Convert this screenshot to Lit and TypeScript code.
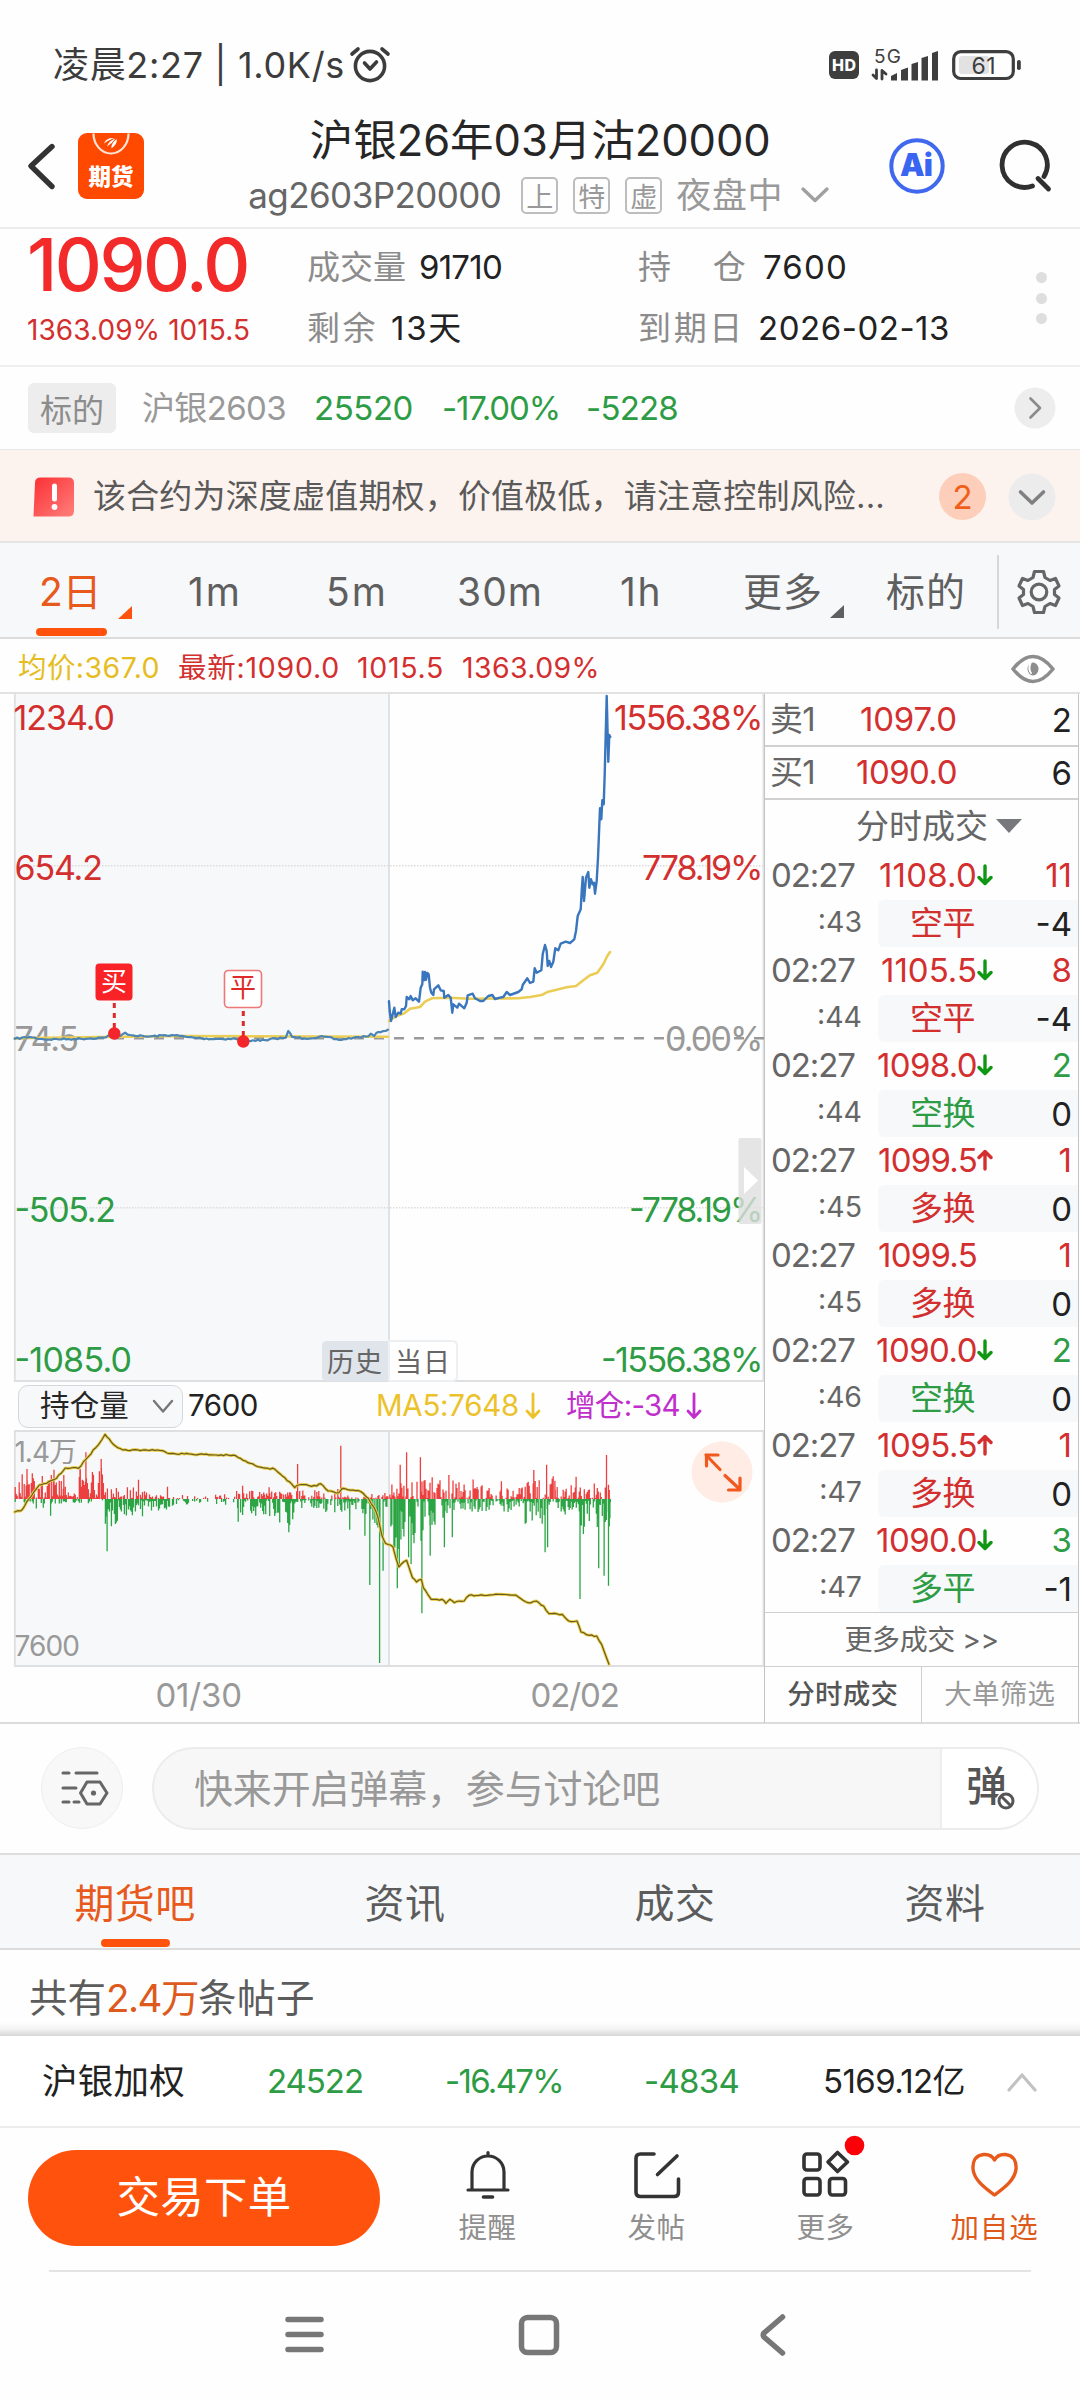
import { LitElement, html, svg, css } from "lit";
import { customElement, property } from "lit/decorators.js";
import { styleMap } from "lit/directives/style-map.js";

const FONT = css`Inter, "Noto Sans CJK SC", sans-serif`;

/** A run of text whose tracking is adjusted so that it fills a given width. */
@customElement("fit-text")
class FitText extends LitElement {
  static styles = css`
    :host { display: inline-block; white-space: nowrap; line-height: 1; flex: none; }
    .run { display: inline-block; }
  `;
  @property({ type: Number }) w = 0;
  @property() text = "";
  @property({ attribute: false }) tracking = 0;
  firstUpdated() {
    const run = this.renderRoot.querySelector(".run") as HTMLElement;
    const n = [...this.text].length;
    if (this.w && n > 1) {
      this.tracking = (this.w - run.getBoundingClientRect().width) / n;
      this.requestUpdate();
    }
  }
  render() {
    return html`<span class="run" style=${styleMap({ letterSpacing: `${this.tracking}px` })}>${this.text}</span>`;
  }
}

const ft = (text: string, w = 0, cls = "") => html`<fit-text class=${cls} .w=${w} .text=${text}></fit-text>`;

type Pt = [number, number];
const path = (pts: Pt[]) => pts.map(([x, y]) => `${x.toFixed(1)},${y.toFixed(1)}`).join(" ");

let seed = 7;
const rnd = () => ((seed = (seed * 16807) % 2147483647) / 2147483647);

const densify = (pts: Pt[], step: number, amp: number): Pt[] => {
  const out: Pt[] = [];
  for (let i = 0; i < pts.length - 1; i++) {
    const [x0, y0] = pts[i];
    const [x1, y1] = pts[i + 1];
    const n = Math.max(1, Math.round((x1 - x0) / step));
    for (let k = 0; k < n; k++) {
      out.push([x0 + ((x1 - x0) * k) / n, y0 + ((y1 - y0) * k) / n + (k ? (rnd() - 0.5) * amp : 0)]);
    }
  }
  out.push(pts[pts.length - 1]);
  return out;
};

const day2: Pt[] = ([[57,931],[59,960],[63,990],[67,975],[73,950],[77,978],[85,965],[92,968],[95,955],[103,955],[108,945],[110,918],[118,925],[122,915],[128,928],[137,922],[147,932],[152,890],[157,880],[158,842],[162,868],[165,843],[168,866],[172,846],[176,850],[180,890],[184,905],[190,912],[192,895],[205,883],[212,898],[221,900],[223,920],[235,912],[242,920],[247,965],[250,940],[262,950],[267,938],[283,952],[290,935],[293,913],[308,908],[315,922],[330,930],[340,930],[355,915],[367,912],[375,924],[390,920],[400,918],[410,903],[420,912],[445,903],[455,895],[458,882],[472,862],[480,876],[490,872],[494,832],[500,845],[514,838],[518,790],[525,762],[530,780],[533,825],[538,810],[543,828],[550,812],[556,772],[565,778],[572,758],[587,752],[600,756],[613,745],[618,720],[623,675],[632,655],[635,600],[638,558],[642,630],[648,560],[655,543],[658,590],[663,565],[668,580],[672,575],[675,608],[680,570],[684,500],[690,352],[694,385],[697,328],[701,340],[704,250],[710,15],[715,212],[718,132],[721,138]] as Pt[])
  .map(([x, y]) => [370 + x / 3, 690 + y / 3]);
const avg2: Pt[] = ([[57,990],[80,975],[103,967],[120,953],[150,948],[165,932],[185,922],[240,920],[300,923],[445,922],[480,918],[515,912],[535,902],[590,889],[618,885],[640,868],[660,853],[682,845],[700,820],[712,795],[720,783]] as Pt[])
  .map(([x, y]) => [370 + x / 3, 690 + y / 3]);
const L = 0.4911;
const day1: Pt[] = densify(([[30,1073],[60,1068],[90,1075],[150,1074],[210,1070],[232,1058],[245,1065],[255,1055],[265,1062],[300,1067],[350,1062],[380,1068],[410,1072],[440,1074],[480,1073],[495,1082],[515,1078],[545,1078],[560,1072],[582,1070],[587,1050],[595,1068],[620,1072],[660,1067],[690,1077],[720,1070],[750,1066],[755,1058],[762,1065],[770,1053],[790,1046]] as Pt[])
  .map(([x, y]) => [x * L, 680 + y / 3]), 2.5, 1.8);
const avg1: Pt[] = ([[30,1072],[200,1068],[380,1065],[790,1067]] as Pt[]).map(([x, y]) => [x * L, 680 + y / 3]);
const holding: Pt[] = densify(([[30,423],[42,420],[50,405],[58,385],[68,365],[80,342],[95,337],[115,322],[133,291],[160,292],[175,265],[195,230],[207,207],[214,190],[222,203],[235,225],[250,237],[320,237],[350,247],[480,254],[495,268],[520,284],[560,295],[580,320],[600,350],[608,342],[645,345],[653,338],[668,360],[690,365],[697,352],[735,362],[750,382],[762,410],[770,440],[777,490],[785,517],[800,527],[806,560],[812,588],[818,578],[828,568],[840,620],[848,633],[858,625],[862,650],[878,685],[900,685],[908,697],[916,685],[925,695],[945,690],[955,673],[1020,670],[1050,672],[1075,695],[1092,690],[1107,705],[1118,728],[1145,730],[1158,750],[1175,750],[1183,783],[1200,793],[1215,795],[1225,820],[1235,860],[1240,880]] as Pt[])
  .map(([x, y]) => [x * L, 1370 + y / 3]), 2.5, 1.6);

type Seg = [number, number];
const redEnv: Seg[] = [[80,84],[135,70],[160,20],[212,92],[300,34],[480,12],[600,22],[700,28],[790,16],[990,58],[1065,34],[1130,66],[1245,44]];
const greenEnv: Seg[] = [[70,12],[110,30],[213,12],[240,78],[300,50],[355,32],[480,14],[560,48],[600,78],[650,26],[740,48],[790,115],[870,150],[920,75],[1060,36],[1110,76],[1180,52],[1245,80]];
const envAt = (e: Seg[], x: number) => (e.find(([end]) => x <= end) ?? e[e.length - 1])[1];
const redSpikes: Seg[] = [[175,140],[206,120],[55,90],[110,88],[163,90],[130,72],[282,58],[341,37],[606,105],[694,160],[548,35],[494,40],[828,140],[815,103],[856,125],[880,65],[914,72],[1021,53],[1087,87],[1113,103],[1130,55],[1173,67],[1235,132],[1239,43]];
const greenSpikes: Seg[] = [[218,157],[103,50],[235,75],[485,68],[588,100],[712,92],[753,258],[773,492],[780,215],[743,110],[809,268],[813,200],[832,175],[837,195],[859,343],[876,170],[905,145],[921,115],[1110,160],[1115,145],[1181,300],[1188,105],[1219,208],[1230,230],[1239,260],[1242,58]];
let redBars = "";
let greenBars = "";
for (let x = 31; x < 1243; x += 2.04) {
  const quiet = x > 355 && x < 480 ? 0.45 : 1;
  const rise = x < 215 ? 0.88 : 0.66;
  if (rnd() < rise * quiet) redBars += `M${(x * L).toFixed(1)} 1498v${(-(3 + envAt(redEnv, x) * rnd() ** 1.5) / 3).toFixed(1)}`;
  if (rnd() < 0.76 * quiet && !(x < 213 && rnd() < 0.5)) greenBars += `M${(x * L).toFixed(1)} 1498v${((4 + envAt(greenEnv, x) * rnd() ** 1.4) / 3).toFixed(1)}`;
}
redSpikes.forEach(([x, h]) => (redBars += `M${(x * L).toFixed(1)} 1498v${(-h / 3).toFixed(1)}`));
greenSpikes.forEach(([x, h]) => (greenBars += `M${(x * L).toFixed(1)} 1498v${(h / 3).toFixed(1)}`));

const label = (x0: number, x1: number, y: number, cls: string, t: string) =>
  svg`<text class=${cls} x=${x0 - 2.5} y=${y} textLength=${x1 - x0 + 4.5}>${t}</text>`;
const rightLabel = (x0: number, y: number, cls: string, t: string) =>
  svg`<text class=${cls} x=${x0} y=${y} textLength=${763.5 - x0}>${t}</text>`;

interface Trade { s: string; p: string; w: number; dir: "up" | "down" | ""; q: string; qc: string; kind: string; kc: string; d: string; }
const trades: Trade[] = [
  { s: ":43", p: "1108.0", w: 98, dir: "down", q: "11", qc: "red", kind: "空平", kc: "red", d: "-4" },
  { s: ":44", p: "1105.5", w: 96, dir: "down", q: "8", qc: "red", kind: "空平", kc: "red", d: "-4" },
  { s: ":44", p: "1098.0", w: 100, dir: "down", q: "2", qc: "green", kind: "空换", kc: "green", d: "0" },
  { s: ":45", p: "1099.5", w: 99, dir: "up", q: "1", qc: "red", kind: "多换", kc: "red", d: "0" },
  { s: ":45", p: "1099.5", w: 99, dir: "", q: "1", qc: "red", kind: "多换", kc: "red", d: "0" },
  { s: ":46", p: "1090.0", w: 101, dir: "down", q: "2", qc: "green", kind: "空换", kc: "green", d: "0" },
  { s: ":47", p: "1095.5", w: 100, dir: "up", q: "1", qc: "red", kind: "多换", kc: "red", d: "0" },
  { s: ":47", p: "1090.0", w: 101, dir: "down", q: "3", qc: "green", kind: "多平", kc: "green", d: "-1" },
];

const arrow = (dir: string) =>
  dir === "down"
    ? html`<svg class="tick" width="16" height="22" viewBox="0 0 16 22"><path d="M8 2V19M2 13.5L8 19.5L14 13.5" stroke="#0f9613" /></svg>`
    : dir === "up"
      ? html`<svg class="tick" width="16" height="22" viewBox="0 0 16 22"><path d="M8 20V3M2 8.5L8 2.5L14 8.5" stroke="#d32f2f" /></svg>`
      : html`<span></span>`;

@customElement("app-root")
class AppRoot extends LitElement {
  static styles = css`
    :host { display: block; width: 1080px; height: 2400px; background: #fefefe; font-family: ${FONT}; color: #222; overflow: hidden; }
    * { box-sizing: border-box; }
    svg { display: block; flex: none; fill: none; stroke-linecap: round; stroke-linejoin: round; }
    svg text { font-family: ${FONT}; stroke: none; }
    .red { color: #d32f2f; } .green { color: #2d9c44; } .grey { color: #8c8c8c; } .orange { color: #dd5a1c; }

    .status { height: 102px; padding: 27px 0 0 53px; display: flex; align-items: center; }
    .status .time { display: flex; align-items: center; gap: 4px; width: 775px; font-size: 36px; color: #3c3c3c; }

    .header { height: 127px; border-bottom: 2px solid #ececec; display: grid; grid-template-columns: 26px 52px 66px 1fr 57px 52.5px 54px 28px; align-items: center; padding-top: 2px; }
    .header .mid { display: flex; flex-direction: column; align-items: center; gap: 15px; padding-left: 46px; }
    .header .title { font-size: 43.5px; color: #262626; height: 44px; display: flex; align-items: center; padding: 3px 0 0 2px; }
    .header .sub { display: flex; align-items: center; height: 38px; font-size: 35px; color: #666; }
    .header .tag { width: 37px; height: 37px; border: 2px solid #bdbdbd; border-radius: 5px; font-size: 27px; color: #999; display: flex; align-items: center; justify-content: center; margin-left: 15px; }
    .header .tag.first { margin-left: 20px; }
    .header .session { color: #999; margin: 0 17px 0 14px; }

    .quote { height: 138px; border-bottom: 2px solid #f0f0f0; display: grid; grid-template-columns: 27px 280px 331px 398px 1fr; }
    .quote .price { display: flex; flex-direction: column; }
    .quote .big { font-size: 73px; font-weight: 550; color: #f22a2a; height: 71px; display: flex; align-items: center; }
    .quote .chg { font-size: 28px; height: 60px; display: flex; align-items: center; }
    .quote .col { padding-top: 8px; }
    .quote .line { height: 61px; display: flex; align-items: center; font-size: 33px; }
    .quote .line .k { margin-right: 13px; }
    .quote .dots { padding-top: 43px; display: flex; flex-direction: column; gap: 9.5px; }
    .quote .dots i { width: 11px; height: 11px; border-radius: 50%; background: #dedede; }

    .under { height: 83px; border-bottom: 1px solid #e8e8e8; display: grid; grid-template-columns: 28px 88px 26px 172px 128px 144px 428px 1fr; align-items: center; font-size: 33px; }
    .under .chip { width: 88px; height: 50px; border-radius: 6px; background: #ededed; color: #8c8c8c; font-size: 32px; display: flex; align-items: center; justify-content: center; }
    .under .name { color: #999; }

    .notice { height: 93px; background: #fdf3ee; border-bottom: 2px solid #e4e4e4; display: grid; grid-template-columns: 33px 60px 846px 69px 1fr; align-items: center; font-size: 33px; color: #5a5a5a; padding-top: 2px; }
    .notice .count { width: 47px; height: 47px; border-radius: 50%; background: #fdceb9; color: #ef5f1c; display: flex; align-items: center; justify-content: center; }

    .periods { height: 96px; background: #f6f8fa; border-bottom: 2px solid #dcdcdc; display: grid; grid-template-columns: 36px 152px 138px 131px 163px 124px 142px 111px 20px 1fr; align-items: center; font-size: 39px; color: #5f5f5f; padding-top: 3px; }
    .periods .on { position: relative; height: 91px; display: flex; align-items: center; padding-left: 3px; color: #e8591c; }
    .periods .on::after { content: ""; position: absolute; left: 0; bottom: 1px; width: 71px; height: 8px; border-radius: 4px; background: #ff530d; }
    .periods .more { position: relative; display: flex; align-items: center; margin-left: -1px; }
    .periods .corner { position: absolute; width: 14px; height: 13px; clip-path: polygon(100% 0, 100% 100%, 0 100%); }
    .periods .corner.a { left: 82px; top: 60px; background: #ff530d; }
    .periods .corner.b { left: 87px; top: 33px; background: #5f5f5f; }
    .periods .rule { width: 2px; height: 74px; background: #d8d8d8; }

    .info { height: 55px; border-bottom: 2px solid #e2e2e2; display: grid; grid-template-columns: 18px 160px 179px 105px 549px 1fr; align-items: center; font-size: 28.5px; padding-top: 6px; }
    .info .avg { color: #e5bd22; }

    .market { height: 1030px; display: grid; grid-template-columns: 764px 315px 1px; border-bottom: 2px solid #dcdcdc; }
    .charts { display: flex; flex-direction: column; }
    .lr { fill: #d32f2f; font-size: 34px; } .lg { fill: #2d9c44; font-size: 34px; } .lz { fill: #999; font-size: 34px; }
    .ls { fill: #999; font-size: 28px; } .ld { fill: #999; font-size: 33px; } .tab { fill: #666; font-size: 27px; } .mk { font-size: 26px; }
    .indicator { height: 48px; display: grid; grid-template-columns: 18px 170px 188px 190px 1fr; align-items: center; font-size: 29.5px; }
    .indicator .select { width: 165px; height: 43px; border: 1.5px solid #d4d7db; border-radius: 10px; background: #f6f8fa; display: flex; align-items: center; padding-left: 21px; gap: 23px; color: #262626; }
    .indicator .ma, .indicator .inc { display: flex; align-items: center; gap: 6px; }
    .indicator .ma { color: #ecc22b; } .indicator .inc { color: #c02fcb; }

    .depth { border-left: 1px solid #c4c4c4; border-right: 1px solid #c4c4c4; }
    .depth .bid { height: 53px; border-bottom: 2px solid #d0d0d0; display: grid; grid-template-columns: 5px 1fr 94px 115px 6px; align-items: center; font-size: 33px; }
    .depth .bid .k { color: #666; } .depth .bid .v { justify-self: end; }
    .depth .head { height: 52px; display: flex; align-items: center; padding-left: 91px; gap: 8px; color: #666; font-size: 33px; }
    .trade { height: 95px; display: flex; flex-direction: column; gap: 2px; font-size: 33px; color: #666; }
    .trade .top { height: 46px; display: grid; grid-template-columns: 6px 93px 113px 20px 1fr 6px; align-items: center; }
    .trade .top .v { justify-self: end; }
    .trade .bottom { height: 47px; display: flex; align-items: center; }
    .trade .sec { width: 113px; padding-right: 16px; text-align: right; font-size: 28.5px; padding-bottom: 5px; }
    .trade .kind { flex: 1; height: 47px; background: #f6f8fa; border-radius: 6px 0 0 6px; display: flex; align-items: center; justify-content: space-between; padding: 0 6px 0 32px; }
    .trade .kind .d { color: #222; }
    .tick path { stroke-width: 3.4; }
    .depth .all { height: 54px; border-top: 1.5px solid #cfcfcf; display: flex; align-items: center; justify-content: center; font-size: 28px; color: #666; }
    .depth .switch { height: 57px; border-top: 1.5px solid #cfcfcf; display: grid; grid-template-columns: 1fr 1fr; font-size: 27.5px; color: #999; }
    .depth .switch div { display: flex; align-items: center; justify-content: center; }
    .depth .switch .on { border-right: 1.5px solid #cfcfcf; color: #555; font-weight: 500; }

    .danmu { height: 131px; border-bottom: 2px solid #dedede; display: flex; align-items: center; padding: 0 0 1px 41px; gap: 29px; }
    .danmu .round { width: 82px; height: 82px; border-radius: 50%; background: #f8f8f8; border: 1.5px solid #eee; display: flex; align-items: center; justify-content: center; padding-left: 5px; }
    .danmu .field { width: 887px; height: 83px; border-radius: 42px; background: #f7f7f7; border: 2px solid #ececec; overflow: hidden; display: flex; align-items: center; justify-content: space-between; padding-left: 40px; font-size: 39px; color: #999; }
    .danmu .send { width: 97px; height: 79px; background: #fff; border-left: 2px solid #eee; display: flex; align-items: center; padding-left: 20px; }

    .sections { height: 95px; background: #f6f8fa; border-bottom: 2px solid #dcdcdc; display: grid; grid-template-columns: repeat(4, 270px); font-size: 40px; color: #5c5c5c; }
    .sections div { display: flex; align-items: center; justify-content: center; position: relative; padding-top: 5px; }
    .sections .on { color: #e8591c; }
    .sections .on::after { content: ""; position: absolute; left: 101px; bottom: 1px; width: 69px; height: 8px; border-radius: 4px; background: #ff530d; }

    .posts { height: 86px; padding: 10px 0 0 29px; display: flex; align-items: center; font-size: 38.5px; color: #5c5c5c; background: linear-gradient(#fefefe 84%, #f3f3f3 92%, #d6d6d6); }

    .index { height: 92px; border-bottom: 2px solid #ececec; display: grid; grid-template-columns: 42px 225px 178px 199px 179px 184px 1fr; align-items: center; font-size: 35.5px; background: #fff; padding-top: 1px; }
    .index .n { font-size: 33px; }

    .actions { height: 142px; display: grid; grid-template-columns: 28px 352px 23px repeat(4, 169px); align-items: start; padding-top: 22px; }
    .actions .order { height: 96px; border-radius: 48px; background: #ff530d; color: #fff; font-size: 43.5px; display: flex; align-items: center; justify-content: center; }
    .actions .act { display: flex; flex-direction: column; align-items: center; font-size: 28.5px; color: #8f8f8f; gap: 14px; }
    .actions .act.fav { color: #dd5a1c; }
    .actions .grid { margin-top: -16px; }
    .homeline { height: 2px; margin: 0 49px; background: #e4e4e4; }
    .nav { height: 128px; display: flex; align-items: center; padding: 0 0 2px 285px; }
    .nav svg { stroke: #777; stroke-width: 5.5; }
    .nav .sq { margin-left: 193px; } .nav .bk { margin-left: 199px; }
  `;

  renderStatus() {
    return html`<div class="status">
      <div class="time">${ft("凌晨2:27 | 1.0K/s", 292)}
        <svg width="42" height="38" viewBox="348 45 42 38" stroke="#3c3c3c" stroke-width="3.6">
          <circle cx="369" cy="65" r="14.6" /><path d="M363.5 62L369 68L375.5 61M351 53L357 48M387 53L381 48" />
        </svg>
      </div>
      <svg width="196" height="40" viewBox="828 44 196 40">
        <rect x="829" y="50" width="30" height="28" rx="6" fill="#3e3e3e" />
        <text x="832" y="69.5" font-size="16" font-weight="800" fill="#fff" textLength="24">HD</text>
        <text x="874" y="61.5" font-size="19" fill="#3e3e3e" textLength="27">5G</text>
        <path d="M876.5 69V77.5L873 74M882 78V69.5L886 73" stroke="#3e3e3e" stroke-width="2.8" />
        <path d="M891 79.5V75L897 72V79.5ZM901 79.5V69L908 66.5V79.5ZM911.5 79.5V63L918 61V79.5ZM921.5 79.5V57L928 55V79.5ZM932 79.5V52L938 50V79.5Z" fill="#3e3e3e" />
        <rect x="959" y="55" width="30" height="18" rx="3" fill="#e2e2e2" />
        <rect x="953.7" y="50.7" width="59.6" height="26.8" rx="7" stroke="#3e3e3e" stroke-width="3.2" />
        <rect x="1017" y="59" width="3.8" height="10" rx="1.8" fill="#3e3e3e" />
        <text x="971.5" y="72.5" font-size="23" fill="#3e3e3e" textLength="24">61</text>
      </svg>
    </div>`;
  }

  renderHeader() {
    return html`<div class="header">
      <span></span>
      <svg width="32" height="50" viewBox="26 140 32 50" stroke="#333" stroke-width="5.4"><path d="M52 145.5L31 165L52 185.5" /></svg>
      <svg width="66" height="66" viewBox="78 132.5 66 66">
        <rect x="78" y="132.5" width="66" height="66" rx="9" fill="#ff4800" />
        <path d="M93.5 133A17.5 20 0 0 0 128.5 133" stroke="#ffe3d6" stroke-width="2.2" stroke-linecap="butt" />
        <path d="M104 143Q106 137 114 137.500Q108 140 104 143ZM107 146Q109 140 115.500 138Q112 143 107 146ZM111.500 148Q117 144 117 138.500Q111 142 111.500 148Z" fill="#fff" />
        <text x="88.5" y="184" font-size="22.500" font-weight="800" fill="#fff" textLength="45">期货</text>
      </svg>
      <div class="mid">
        <div class="title">${ft("沪银26年03月沽20000", 461)}</div>
        <div class="sub">${ft("ag2603P20000", 253)}
          <span class="tag first">上</span><span class="tag">特</span><span class="tag">虚</span>
          ${ft("夜盘中", 107, "session")}
          <svg width="30" height="20" viewBox="801 185 30 20" stroke="#a0a0a0" stroke-width="3.4"><path d="M804 189L816 200.500L828 189" /></svg>
        </div>
      </div>
      <svg width="56" height="56" viewBox="889 137.500 56 56">
        <circle cx="917" cy="165.500" r="25.700" stroke="#3f68ee" stroke-width="4" />
        <text x="900" y="175.500" font-size="31" font-weight="900" fill="#3a64f2" textLength="33">Ai</text>
      </svg>
      <span></span>
      <svg width="54" height="54" viewBox="998 139 54 54" stroke="#303030" stroke-width="4.800">
        <path d="M1032.500 186A22.600 22.600 0 1 1 1044 176.500" /><path d="M1038 178.500L1048.500 189" />
      </svg>
    </div>`;
  }

  renderQuote() {
    return html`<div class="quote">
      <span></span>
      <div class="price"><div class="big">${ft("1090.0", 221)}</div><div class="chg red">${ft("1363.09% 1015.5", 223)}</div></div>
      <div class="col">
        <div class="line">${ft("成交量", 99, "k grey")}${ft("91710", 83)}</div>
        <div class="line">${ft("剩余", 71, "k grey")}${ft("13天", 72)}</div>
      </div>
      <div class="col">
        <div class="line">${ft("持　仓", 112, "k grey")}${ft("7600", 85)}</div>
        <div class="line">${ft("到期日", 107, "k grey")}${ft("2026-02-13", 192)}</div>
      </div>
      <div class="dots"><i></i><i></i><i></i></div>
    </div>
    <div class="under">
      <span></span><span class="chip">标的</span><span></span>
      ${ft("沪银2603", 144, "name")}${ft("25520", 99, "green")}${ft("-17.00%", 118, "green")}${ft("-5228", 92, "green")}
      <svg width="42" height="42" viewBox="0 0 42 42" stroke="#8a8a8a" stroke-width="2.600"><circle cx="21" cy="21" r="20.500" fill="#ededed" stroke="none" /><path d="M16.500 11.500L26 21L16.500 30.500" /></svg>
    </div>
    <div class="notice">
      <span></span>
      <svg width="42" height="42" viewBox="0 0 42 42">
        <defs><linearGradient id="warn" x1="0" y1="0" x2="1" y2="1"><stop offset="0" stop-color="#fb2f33" /><stop offset="1" stop-color="#ff7f7c" /></linearGradient></defs>
        <path d="M0.500 40.500L2 7Q2 1.500 7.500 1.500H35.500Q41 1.500 41 7V35Q41 40.500 35.500 40.500Z" fill="url(#warn)" />
        <path d="M21.500 10V23" stroke="#fff" stroke-width="5" /><circle cx="21.500" cy="31" r="2.900" fill="#fff" />
      </svg>
      ${ft("该合约为深度虚值期权，价值极低，请注意控制风险...", 792)}
      <span class="count">2</span>
      <svg width="48" height="48" viewBox="0 0 48 48" stroke="#808080" stroke-width="3.600"><circle cx="24" cy="24" r="23.500" fill="#ececec" stroke="none" /><path d="M12.500 19L24 30L35.500 19" /></svg>
    </div>`;
  }

  renderPeriods() {
    return html`<div class="periods">
      <span></span>
      <div class="on">${ft("2日", 62)}<i class="corner a"></i></div>
      ${ft("1m", 54)}${ft("5m", 62)}${ft("30m", 86)}${ft("1h", 42)}
      <div class="more">${ft("更多", 80)}<i class="corner b"></i></div>
      ${ft("标的", 80)}
      <span class="rule"></span>
      <svg width="44" height="48" viewBox="-22 -24 44 48" stroke="#666" stroke-width="3.200">
        <path d="M-4.500 -20.500H4.500L6 -14.500L11 -11.500L16.500 -13.500L20 -6L15.500 -2.500V2.500L20 6L16.500 13.500L11 11.500L6 14.500L4.500 20.500H-4.500L-6 14.500L-11 11.500L-16.500 13.500L-20 6L-15.500 2.500V-2.500L-20 -6L-16.500 -13.500L-11 -11.500L-6 -14.500Z" />
        <circle r="7.800" />
      </svg>
    </div>
    <div class="info">
      <span></span>
      ${ft("均价:367.0", 142, "avg")}${ft("最新:1090.0", 162, "red")}${ft("1015.5", 87, "red")}${ft("1363.09%", 138, "red")}
      <svg width="44" height="30" viewBox="-22 -15 44 30" stroke="#8d8d8d" stroke-width="3.600"><path d="M-20 0Q-10 -12.500 0 -12.500T20 0Q10 12.500 0 12.500T-20 0Z" /><ellipse rx="5.500" ry="6.500" fill="#8d8d8d" stroke="none" /><path d="M-2.500 -6Q-5 0 -2 4" stroke="#fff" stroke-width="2" /></svg>
    </div>`;
  }

  renderCharts() {
    return html`<div class="charts">
      <svg width="764" height="688" viewBox="0 693 764 688">
        <rect x="14.500" y="693" width="374.500" height="688" fill="#f6f8fa" />
        <path d="M14.800 693V1381M389 693V1381M763.500 693V1381M15 1380H764" stroke="#dedfe1" stroke-width="1.800" />
        <path d="M15 864.700H764M15 1206.700H764" stroke="#dcdcdc" stroke-width="1.500" stroke-dasharray="1.500 1.500" stroke-linecap="butt" />
        <path d="M14 1037.300H764" stroke="#999" stroke-width="2.500" stroke-dasharray="10 10" stroke-linecap="butt" />
        ${label(16, 113, 729, "lr", "1234.0")}${label(17, 101, 879, "lr", "654.2")}${label(17, 77, 1050, "lz", "74.5")}
        ${label(17, 114, 1221, "lg", "-505.2")}${label(17, 130, 1371, "lg", "-1085.0")}
        ${rightLabel(614, 729, "lr", "1556.38%")}${rightLabel(642, 879, "lr", "778.19%")}${rightLabel(665, 1050, "lz", "0.00%")}
        ${rightLabel(629, 1221, "lg", "-778.19%")}${rightLabel(601, 1371, "lg", "-1556.38%")}
        <polyline points=${path(avg1)} stroke="#ebce55" stroke-width="2.600" />
        <polyline points=${path(day1)} stroke="#4a85b5" stroke-width="2.200" />
        <polyline points=${path(avg2)} stroke="#ebcd55" stroke-width="2.600" />
        <polyline points=${path(day2)} stroke="#3a76bd" stroke-width="2.400" />
        <rect x="95.500" y="962.500" width="37" height="37" rx="4" fill="#f92226" />
        <text class="mk" x="101" y="989.500" fill="#fff">买</text>
        <path d="M114.300 1002V1028" stroke="#e02a2a" stroke-width="3" stroke-dasharray="5 5" stroke-linecap="butt" />
        <circle cx="114.300" cy="1032.500" r="6.200" fill="#f3262b" />
        <rect x="224.500" y="969.500" width="37" height="37" rx="4" fill="#fff" stroke="#e77" stroke-width="1.600" />
        <text class="mk" x="230" y="996" fill="#e02a2a">平</text>
        <path d="M243.300 1010V1036" stroke="#e02a2a" stroke-width="3" stroke-dasharray="5 5" stroke-linecap="butt" />
        <circle cx="243.300" cy="1040.500" r="6.200" fill="#f3262b" />
        <path d="M327 1340H389V1380H327Q322 1380 322 1375V1345Q322 1340 327 1340Z" fill="#e0e4eb" />
        <path d="M389 1340H452Q457 1340 457 1345V1375Q457 1380 452 1380H389Z" fill="#fff" stroke="#edf0f2" stroke-width="2" />
        <text class="tab" x="327" y="1370.500" textLength="55">历史</text><text class="tab" x="395" y="1370.500" textLength="55">当日</text>
        <rect x="738.500" y="1137" width="23" height="86" rx="2" fill="#dedede" fill-opacity="0.800" />
        <path d="M744 1166L758 1179.500L744 1193Z" fill="#fff" />
      </svg>
      <div class="indicator">
        <span></span>
        <div class="select">${ft("持仓量", 89)}<svg width="22" height="15" viewBox="0 0 22 15" stroke="#777" stroke-width="2.400"><path d="M2 2L11 12.500L20 2" /></svg></div>
        ${ft("7600", 70)}
        <div class="ma">${ft("MA5:7648", 143)}<svg width="16" height="28" viewBox="0 0 16 28" stroke="#ecc22b" stroke-width="2.800"><path d="M8 2V25M2 19L8 25.500L14 19" /></svg></div>
        <div class="inc">${ft("增仓:-34", 114)}<svg width="16" height="28" viewBox="0 0 16 28" stroke="#c02fcb" stroke-width="2.800"><path d="M8 2V25M2 19L8 25.500L14 19" /></svg></div>
      </div>
      <svg width="764" height="292" viewBox="0 1429 764 292">
        <rect x="14.500" y="1430" width="374.500" height="235" fill="#f6f8fa" />
        <path d="M15 1430H764M14.800 1430V1665M389 1430V1665M763.500 1430V1665M15 1665H764" stroke="#dedfe1" stroke-width="1.800" />
        ${label(17, 75, 1461, "ls", "1.4万")}${label(17, 78, 1655, "ls", "7600")}
        <path d=${redBars} stroke="#ec4040" stroke-width="1.300" stroke-linecap="butt" />
        <path d=${greenBars} stroke="#2ba544" stroke-width="1.300" stroke-linecap="butt" />
        <polyline points=${path(holding)} stroke="#ead04e" stroke-width="3" />
        <polyline points=${path(holding)} stroke="#6b5d20" stroke-width="1.200" />
        <circle cx="722" cy="1471" r="30.500" fill="#ffece4" />
        <path d="M720 1468.500L706 1454M706.500 1465V1454H718M725 1474.500L740 1488.500M728.500 1489H740V1477" stroke="#f2591f" stroke-width="3.200" />
        ${label(158, 240, 1705.500, "ld", "01/30")}${label(533, 618, 1705.500, "ld", "02/02")}
      </svg>
    </div>`;
  }

  renderDepth() {
    return html`<div class="depth">
      <div class="bid"><span></span>${ft("卖1", 45, "k")}${ft("1097.0", 97, "v red")}<span class="v">2</span></div>
      <div class="bid"><span></span>${ft("买1", 45, "k")}${ft("1090.0", 101, "v red")}<span class="v">6</span></div>
      <div class="head">${ft("分时成交", 132)}<svg width="26" height="14" viewBox="0 0 26 14"><path d="M0 0H26L13 14Z" fill="#77787c" /></svg></div>
      ${trades.map((t) => html`<div class="trade">
        <div class="top"><span></span>${ft("02:27", 84)}${ft(t.p, t.w, "v red")}${arrow(t.dir)}<span class="v ${t.qc}">${t.q}</span></div>
        <div class="bottom"><span class="sec">${t.s}</span><div class="kind">${ft(t.kind, 65, t.kc)}<span class="d">${t.d}</span></div></div>
      </div>`)}
      <div class="all">${ft("更多成交 >>", 154)}</div>
      <div class="switch"><div class="on">${ft("分时成交", 111)}</div><div>${ft("大单筛选", 111)}</div></div>
    </div>`;
  }

  renderFeed() {
    return html`<div class="danmu">
      <div class="round"><svg width="48" height="38" viewBox="0 0 48 38" stroke="#666" stroke-width="3">
        <path d="M2 4H8M15 4H36M2 19H15M2 33H8M13 33H18" />
        <path d="M26 13H39L46 24L39 35H26L19.500 24Z" /><circle cx="32.500" cy="24" r="2.600" fill="#666" stroke="none" />
      </svg></div>
      <div class="field">${ft("快来开启弹幕，参与讨论吧", 466)}
        <div class="send"><svg width="56" height="56" viewBox="960 1760 56 56">
          <text x="964" y="1801" font-size="41" font-weight="500" fill="#555">弹</text>
          <circle cx="1004" cy="1801" r="10" fill="#fff" /><circle cx="1004" cy="1801" r="7" stroke="#555" stroke-width="3" /><path d="M999.500 1796.500L1008.500 1805.500" stroke="#555" stroke-width="3" />
        </svg></div>
      </div>
    </div>
    <div class="sections"><div class="on">${ft("期货吧", 121)}</div><div>${ft("资讯", 81)}</div><div>${ft("成交", 81)}</div><div>${ft("资料", 81)}</div></div>
    <div class="posts">${ft("共有", 77)}${ft("2.4万", 92, "orange")}${ft("条帖子", 117)}</div>
    <div class="index">
      <span></span>${ft("沪银加权", 143)}${ft("24522", 96, "n green")}${ft("-16.47%", 118, "n green")}${ft("-4834", 95, "n green")}${ft("5169.12亿", 142, "n")}
      <svg width="30" height="20" viewBox="0 0 30 20" stroke="#c2c2c2" stroke-width="3.200"><path d="M2 18L15 3L28 18" /></svg>
    </div>`;
  }

  renderActions() {
    return html`<div class="actions">
      <span></span><div class="order">${ft("交易下单", 175)}</div><span></span>
      <div class="act"><svg width="46" height="50" viewBox="464 2150 46 50" stroke="#333" stroke-width="3.200">
        <path d="M467 2190H507M471 2189V2172A16 16 0 0 1 503 2172V2189M487 2156V2152.500" /><path d="M482.500 2197H491.500" stroke-width="3.600" /></svg>${ft("提醒", 58)}</div>
      <div class="act"><svg width="50" height="50" viewBox="631 2150 50 50" stroke="#333" stroke-width="3.600">
        <path d="M653 2154H639.500Q635 2154 635 2158.500V2192Q635 2196.500 639.500 2196.500H673Q677.500 2196.500 677.500 2192V2179M676 2156L656.500 2174.500" /></svg>${ft("发帖", 58)}</div>
      <div class="act"><svg width="80" height="66" viewBox="785 2134 80 66" stroke="#333" stroke-width="3.600" class="grid">
        <rect x="803" y="2154" width="16" height="16" rx="3" /><path d="M836.500 2152.500L846.500 2162L836.500 2171.500L827 2162Z" /><rect x="803" y="2178.500" width="16" height="16.500" rx="3" /><rect x="828.500" y="2178.500" width="16" height="16.500" rx="3" />
        <circle cx="853.500" cy="2145.500" r="9.800" fill="#fb0007" stroke="none" /></svg>${ft("更多", 58)}</div>
      <div class="act fav"><svg width="50" height="50" viewBox="970 2150 50 50" stroke="#e8591c" stroke-width="3.400">
        <path d="M994.500 2160C991 2153.500 985.500 2154.500 983.500 2154.500C975 2155.500 972.500 2162 973 2169C974 2180 985 2188 994.500 2195C1004 2188 1015 2180 1016 2169C1016.500 2162 1014 2155.500 1005.500 2154.500C1003.500 2154.500 998 2153.500 994.500 2160Z" /></svg>${ft("加自选", 88)}</div>
    </div>
    <div class="homeline"></div>
    <div class="nav">
      <svg width="40" height="40" viewBox="0 0 40 40"><path d="M3 4.500H36M3 19.500H36M3 34.500H36" /></svg>
      <svg class="sq" width="42" height="42" viewBox="0 0 42 42"><rect x="3.500" y="3.500" width="35" height="35" rx="6" /></svg>
      <svg class="bk" width="28" height="42" viewBox="0 0 28 42"><path d="M23.500 3L5 19Q3.500 21 5 23L23.500 39" /></svg>
    </div>`;
  }

  render() {
    return html`${this.renderStatus()}${this.renderHeader()}${this.renderQuote()}${this.renderPeriods()}
      <div class="market">${this.renderCharts()}${this.renderDepth()}</div>
      ${this.renderFeed()}${this.renderActions()}`;
  }
}
